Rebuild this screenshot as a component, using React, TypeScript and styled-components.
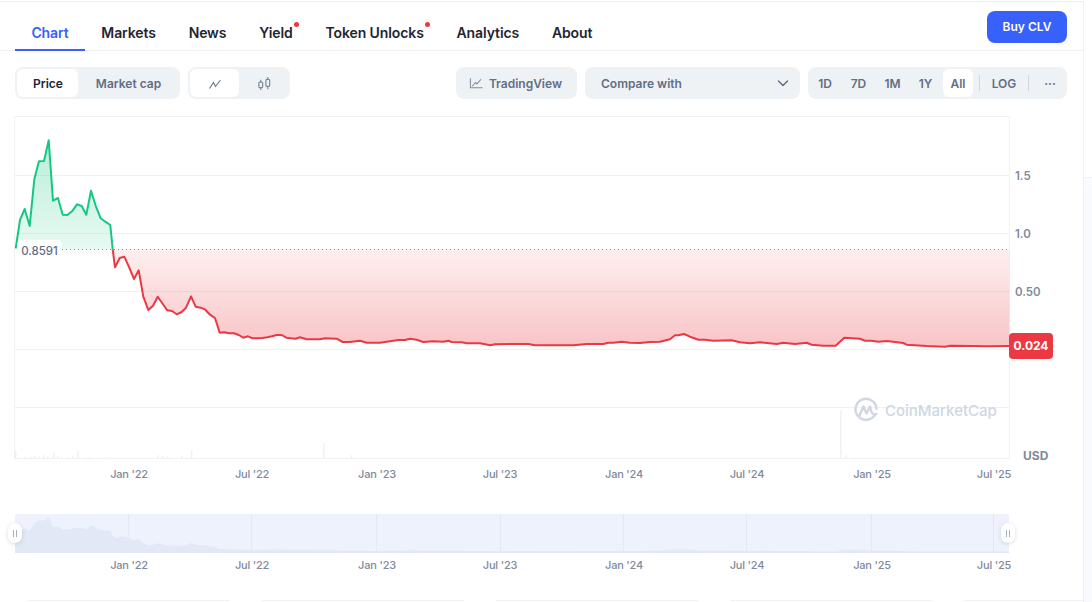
import React from "react";
import styled, { createGlobalStyle } from "styled-components";

const Global = createGlobalStyle`
  html, body { margin: 0; padding: 0; background: #fff; }
  body { font-family: Inter, "Liberation Sans", sans-serif; overflow: hidden; }
  * { box-sizing: border-box; }
`;

const Shell = styled.div`
  display: flex;
  width: 1092px;
  height: 602px;
  overflow: hidden;
`;

const Page = styled.div`
  flex: none;
  width: 1084px;
  height: 601px;
  overflow: hidden;
  border-top: 1px solid #eff2f5;
  border-right: 1px solid #eff2f5;
  margin-top: 1px;
`;

const SidePanel = styled.div`
  flex: 1;
  margin-top: 177px;
  border-top: 1px solid #eff2f5;
  background: #f9fafd;
`;

const NavBar = styled.nav`
  height: 49px;
  padding: 0 16px 0 15px;
  border-bottom: 1px solid #eff2f5;
  display: flex;
  align-items: flex-end;
  justify-content: space-between;
`;

const Tabs = styled.div`
  display: flex;
`;

const Tab = styled.div<{ $active?: boolean }>`
  height: 36px;
  padding: 8px 16.4px 0;
  font-size: 14px;
  letter-spacing: -0.1px;
  line-height: 20px;
  font-weight: 600;
  color: ${(p) => (p.$active ? "#3861fb" : "#222531")};
  border-bottom: 2px solid ${(p) => (p.$active ? "#3861fb" : "transparent")};
  margin-bottom: -1px;
`;

const Label = styled.span`
  position: relative;
`;

const Dot = styled.i`
  position: absolute;
  top: -2px;
  right: -6px;
  width: 5px;
  height: 5px;
  border-radius: 50%;
  background: #ea3943;
`;

const BuyButton = styled.button`
  align-self: flex-start;
  margin-top: 9px;
  width: 80px;
  height: 32px;
  border: 0;
  border-radius: 8px;
  background: #3861fb;
  color: #fff;
  font: 600 12px/32px Inter, sans-serif;
  padding: 0;
`;

const Toolbar = styled.div`
  display: flex;
  align-items: center;
  height: 32px;
  margin-top: 16px;
  padding: 0 16px 0 15px;
  gap: 8px;
`;

const Segment = styled.div`
  display: flex;
  height: 32px;
  padding: 2px;
  border-radius: 8px;
  background: #eff2f5;
`;

const SegButton = styled.div<{ $active?: boolean; $w: number }>`
  width: ${(p) => p.$w}px;
  padding-left: 1px;
  display: flex;
  align-items: center;
  justify-content: center;
  border-radius: 6px;
  font-size: 12px;
  font-weight: 600;
  color: ${(p) => (p.$active ? "#222531" : "#616e85")};
  background: ${(p) => (p.$active ? "#fff" : "transparent")};
`;

const Spacer = styled.div`
  flex: 1;
`;

const PlainButton = styled.div`
  height: 32px;
  padding: 0 15px 0 13px;
  width: 121px;
  display: flex;
  align-items: center;
  gap: 5px;
  border-radius: 8px;
  background: #eff2f5;
  color: #616e85;
  font-size: 12px;
  font-weight: 600;
`;

const Compare = styled(PlainButton)`
  width: 215px;
  padding: 0 10px 0 16px;
  justify-content: space-between;
`;

const Range = styled(Segment)`
  width: 259px;
`;

const RangeButton = styled.div<{ $active?: boolean; $w: number }>`
  width: ${(p) => p.$w}px;
  display: flex;
  align-items: center;
  justify-content: center;
  border-radius: 6px;
  font-size: 12px;
  font-weight: 600;
  color: #616e85;
  background: ${(p) => (p.$active ? "#fff" : "transparent")};
`;

const Divider = styled.div`
  width: 1px;
  height: 16px;
  align-self: center;
  background: #cfd6e4;
  margin: 0 6px;
`;

const ChartWrap = styled.div`
  position: relative;
  margin-top: 17px;
  height: 484px;
`;

const ChartSvg = styled.svg`
  display: block;
`;

const AxisText = styled.text`
  font-family: Inter, sans-serif;
  font-size: 11px;
  letter-spacing: -0.2px;
  font-weight: 500;
  fill: #808a9d;
`;

const YText = styled(AxisText)`
  font-size: 11.5px;
  letter-spacing: 0;
  font-weight: 600;
`;

const UsdText = styled(AxisText)`
  font-size: 12px;
  letter-spacing: 0;
  font-weight: 700;
`;

const Watermark = styled.text`
  font-family: Inter, sans-serif;
  font-size: 15px;
  font-weight: 500;
  fill: #cfd6e4;
`;

const BaseChip = styled.div`
  position: absolute;
  left: 17px;
  top: 124px;
  width: 45px;
  height: 20px;
  background: #fff;
  border-radius: 5px 5px 0 0;
  color: #616e85;
  font-size: 11.5px;
  font-weight: 500;
  line-height: 20px;
  text-align: center;
  padding-top: 1px;
`;

const PriceChip = styled.div`
  position: absolute;
  left: 1009px;
  top: 217px;
  width: 44px;
  height: 26px;
  background: #ea3943;
  border-radius: 4px;
  color: #fff;
  font-size: 12px;
  font-weight: 700;
  line-height: 26px;
  text-align: center;
`;

const Handle = styled.div<{ $x: number }>`
  position: absolute;
  left: ${(p) => p.$x}px;
  top: 407px;
  width: 14px;
  height: 20px;
  border-radius: 7px;
  background: #fff;
  box-shadow: 0 1px 4px rgba(88, 102, 126, 0.22);
  display: flex;
  align-items: center;
  justify-content: center;
  gap: 2px;
  &::before,
  &::after {
    content: "";
    width: 1px;
    height: 7px;
    background: #a6b0c3;
  }
`;

const Cards = styled.div`
  display: flex;
  gap: 32px;
  padding-left: 28px;
`;

const Card = styled.div`
  width: 202px;
  height: 20px;
  flex: none;
  border-top: 1px solid #eff2f5;
`;

const greenPts: [number, number][] = [
  [47,415],[60,330],[74,297],[89,348],[103,208],[117,154],[132,153],[146,91],[159,272],[174,264],[188,314],[202,315],[216,304],[231,283],[245,288],[259,314],[273,242],[288,290],[302,325],[316,335],[331,345],[338,418],
];
const redA: [number, number][] = [
  [345,472],[359,444],[373,440],[388,473],[402,507],[416,481],[430,560],[445,600],[459,587],[473,560],[487,580],[502,601],[516,603],[530,613],[545,606],[558,593],[573,559],[587,590],[602,593],[616,599],[630,614],[645,624],[659,668],[673,667],[687,670],[702,670],[716,675],[730,683],[744,679],[758,685],[773,685],[787,684],[802,682],[816,679],[830,675],[845,675],[859,683],[873,685],[887,686],
];
const redB: [number, number][] = [
  [0,112],[20,118],[60,118],[75,115],[110,116],[128,126],[150,126],[180,122],[200,128],[240,128],[270,124],[295,120],[315,120],[330,116],[350,119],[370,126],[400,124],[430,125],[445,122],[455,126],[485,127],[500,130],[540,130],[570,136],[585,133],[650,132],[685,132],[705,136],[820,136],[860,132],[910,132],[925,128],[940,128],[965,125],[990,128],[1020,129],
];
const redC: [number, number][] = [
  [30,126],[60,125],[90,118],[105,106],[115,106],[132,102],[150,110],[175,119],[195,119],[220,122],[275,121],[300,127],[330,130],[360,127],[410,132],[430,128],[465,132],[500,128],[515,134],[550,137],[587,137],[613,113],[660,116],[675,122],[695,122],[715,125],[740,123],[790,129],[800,134],[860,138],[915,140],[930,137],[1000,138],[1040,139],[1108,138],
];

const green = greenPts.map(([x, y]) => [x / 3, y / 3 + 110] as [number, number]);
const red: [number, number][] = [
  ...redA.map(([x, y]) => [x / 3, y / 3 + 110] as [number, number]),
  ...redB.map(([x, y]) => [x / 3 + 300, y / 3 + 300] as [number, number]),
  ...redC.map(([x, y]) => [x / 3 + 640, y / 3 + 300] as [number, number]),
];
red.unshift(green[green.length - 1]);
const toD = (p: [number, number][]) => p.map(([x, y]) => `${x.toFixed(1)},${y.toFixed(1)}`).join(" ");
const base = 249.5;
const greenArea = `${toD(green)} ${green[0][0]},${base}`;
const redArea = `${toD(red)} ${red[red.length - 1][0]},${base}`;
const all = [...green, ...red.slice(1)];
const navPts: [number, number][] = all.map(([x, y]) => [x, 517 + (y - 141) * 0.168]);
const navArea = `15,553 ${toD(navPts)} 1009,553`;

const grid = [175.5, 233.5, 291.5, 349.5, 407.5];
const ticks: [number, string][] = [
  [129, "Jan '22"], [252, "Jul '22"], [377, "Jan '23"], [500, "Jul '23"],
  [624, "Jan '24"], [747, "Jul '24"], [872, "Jan '25"], [994, "Jul '25"],
];
const navLines = [128.5, 251.5, 376.5, 500.5, 623.5, 746.5, 871.5, 993.5];
const volumes: [number, number][] = [
  [15,7],[25,1],[30,1.5],[34,2.5],[38,1.5],[43,3],[47,1.5],[53,6],[57,2],[67,1],[72,2],[77,7],[87,1],[90,1],[105,1],[109,1],[138,1],[157,3],[162,2],[167,2],[181,2],[191,8],[323,15],[351,3],[840,48],[845,3],[855,1],
];

const ranges: [string, number][] = [["1D", 30], ["7D", 37], ["1M", 31], ["1Y", 35], ["All", 30]];

function LineIcon() {
  return (
    <svg width="16" height="16" viewBox="0 0 16 16" fill="none" stroke="#6f7b91" strokeWidth="1.2">
      <path d="M2.5 13.5 L6.5 7.5 L8.5 11.5 L13.5 5" />
    </svg>
  );
}

function CandleIcon() {
  return (
    <svg width="15" height="15" viewBox="0 0 16 16" fill="none" stroke="#808a9d" strokeWidth="1.3">
      <rect x="2" y="6.5" width="4" height="6" rx="1" />
      <path d="M4 4v2.5M4 12.5V15" />
      <rect x="9.5" y="3.5" width="4" height="7.5" rx="1" />
      <path d="M11.5 1v2.5M11.5 11v3" />
    </svg>
  );
}

function TvIcon() {
  return (
    <svg width="16" height="16" viewBox="0 0 16 16" fill="none" stroke="#808a9d" strokeWidth="1.1">
      <path d="M1.5 3v10H14.5" />
      <path d="M3.5 11.5 L7 7.5 L8.5 9 L13 4" />
    </svg>
  );
}

function Chevron() {
  return (
    <svg width="14" height="14" viewBox="0 0 14 14" fill="none" stroke="#616e85" strokeWidth="1.5" strokeLinecap="round" strokeLinejoin="round">
      <path d="M2.5 5 L7 9.5 L11.5 5" />
    </svg>
  );
}

export default function App() {
  return (
    <>
      <Global />
      <Shell>
        <Page>
          <NavBar>
            <Tabs>
              <Tab $active>Chart</Tab>
              <Tab>Markets</Tab>
              <Tab>News</Tab>
              <Tab><Label>Yield<Dot /></Label></Tab>
              <Tab><Label>Token Unlocks<Dot /></Label></Tab>
              <Tab>Analytics</Tab>
              <Tab>About</Tab>
            </Tabs>
            <BuyButton>Buy CLV</BuyButton>
          </NavBar>
          <Toolbar>
            <Segment>
              <SegButton $active $w={61}>Price</SegButton>
              <SegButton $w={100}>Market cap</SegButton>
            </Segment>
            <Segment>
              <SegButton $active $w={49}><LineIcon /></SegButton>
              <SegButton $w={49}><CandleIcon /></SegButton>
            </Segment>
            <Spacer />
            <PlainButton><TvIcon />TradingView</PlainButton>
            <Compare>Compare with<Chevron /></Compare>
            <Range>
              {ranges.map(([t, w]) => (
                <RangeButton key={t} $w={w} $active={t === "All"}>{t}</RangeButton>
              ))}
              <Divider />
              <RangeButton $w={36}>LOG</RangeButton>
              <Divider />
              <RangeButton $w={30}>···</RangeButton>
            </Range>
          </Toolbar>
          <ChartWrap>
            <ChartSvg width={1083} height={484} viewBox="0 116 1083 484">
              <defs>
                <linearGradient id="g" gradientUnits="userSpaceOnUse" x1="0" y1="141" x2="0" y2="250">
                  <stop offset="0" stopColor="#16c784" stopOpacity="0.3" />
                  <stop offset="1" stopColor="#16c784" stopOpacity="0.1" />
                </linearGradient>
                <linearGradient id="r" gradientUnits="userSpaceOnUse" x1="0" y1="250" x2="0" y2="347">
                  <stop offset="0" stopColor="#ea3943" stopOpacity="0.08" />
                  <stop offset="1" stopColor="#ea3943" stopOpacity="0.3" />
                </linearGradient>
              </defs>
              <rect x="14.5" y="116.5" width="995" height="342" fill="none" stroke="#eff2f5" />
              {grid.map((y) => (
                <line key={y} x1="15" x2="1009" y1={y} y2={y} stroke="#eff2f5" />
              ))}
              {volumes.map(([x, h]) => (
                <rect key={x} x={x} y={458 - h} width="1.5" height={h} fill="#eff2f5" />
              ))}
              <polygon points={greenArea} fill="url(#g)" />
              <polygon points={redArea} fill="url(#r)" />
              <line x1="62" x2="1009" y1={base} y2={base} stroke="#808a9d" strokeDasharray="1 3" />
              <polyline points={toD(green)} fill="none" stroke="#16c784" strokeWidth="2" strokeLinejoin="round" />
              <polyline points={toD(red)} fill="none" stroke="#ea3943" strokeWidth="2" strokeLinejoin="round" />
              <YText x="1015" y="179.5">1.5</YText>
              <YText x="1015" y="237.5">1.0</YText>
              <YText x="1015" y="295.5">0.50</YText>
              <UsdText x="1023" y="460">USD</UsdText>
              <g fill="none" stroke="#cfd6e4" strokeWidth="2.4" strokeLinecap="round" strokeLinejoin="round">
                <path d="M874.5 415.5 A10.5 10.5 0 1 1 876.5 409" />
                <path d="M859.5 415.5 L863.5 406.5 L866.5 413.5 L870 406.5 C871 412 872.5 416 876.5 414" />
              </g>
              <Watermark x="885" y="415.5">CoinMarketCap</Watermark>
              {ticks.map(([x, t]) => (
                <AxisText key={t} x={x} y="478" textAnchor="middle">{t}</AxisText>
              ))}
              <rect x="15" y="514" width="994" height="39" fill="#eef2fd" />
              <polygon points={navArea} fill="#e2e8f6" />
              {navLines.map((x) => (
                <line key={x} x1={x} x2={x} y1="514" y2="553" stroke="#e2e8f6" />
              ))}
              {ticks.map(([x, t]) => (
                <AxisText key={t} x={x} y="569" textAnchor="middle">{t}</AxisText>
              ))}
            </ChartSvg>
            <BaseChip>0.8591</BaseChip>
            <PriceChip>0.024</PriceChip>
            <Handle $x={7.5} />
            <Handle $x={1001} />
          </ChartWrap>
          <Cards>
            <Card /><Card /><Card /><Card /><Card />
          </Cards>
        </Page>
        <SidePanel />
      </Shell>
    </>
  );
}
